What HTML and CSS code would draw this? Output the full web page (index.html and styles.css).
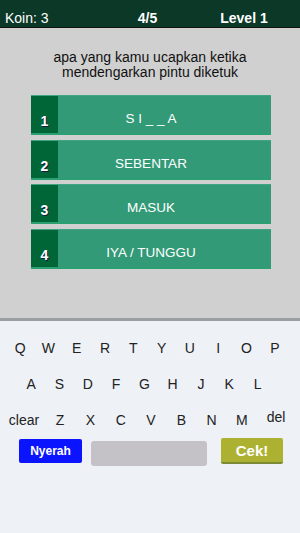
FILE: index.html
```html
<!DOCTYPE html>
<html lang="id">
<head>
    <meta charset="UTF-8">
    <meta name="viewport" content="width=device-width, initial-scale=1.0">
    <title>Tebak Kata</title>
    <link rel="stylesheet" href="styles.css">
</head>
<body>
    <div class="header">
        <div class="koin">Koin: 3</div>
        <div class="soal">4/5</div>
        <div class="level">Level 1</div>
    </div>

    <div class="board">
        <p class="question">apa yang kamu ucapkan ketika<br>mendengarkan pintu diketuk</p>
        <div class="options">
            <div class="option"><span class="num">1</span><span class="text">S I _ _ A</span></div>
            <div class="option"><span class="num">2</span><span class="text">SEBENTAR</span></div>
            <div class="option"><span class="num">3</span><span class="text">MASUK</span></div>
            <div class="option"><span class="num">4</span><span class="text">IYA / TUNGGU</span></div>
        </div>
    </div>

    <div class="keyboard">
        <div class="row row1">
            <span class="key">Q</span><span class="key">W</span><span class="key">E</span><span class="key">R</span><span class="key">T</span><span class="key">Y</span><span class="key">U</span><span class="key">I</span><span class="key">O</span><span class="key">P</span>
        </div>
        <div class="row row2">
            <span class="key">A</span><span class="key">S</span><span class="key">D</span><span class="key">F</span><span class="key">G</span><span class="key">H</span><span class="key">J</span><span class="key">K</span><span class="key">L</span>
        </div>
        <div class="row row3">
            <span class="key wide">clear</span><span class="key">Z</span><span class="key">X</span><span class="key">C</span><span class="key">V</span><span class="key">B</span><span class="key">N</span><span class="key">M</span><span class="key del">del</span>
        </div>
        <div class="actions">
            <button class="btn-nyerah">Nyerah</button>
            <div class="answer"></div>
            <button class="btn-cek">Cek!</button>
        </div>
    </div>
</body>
</html>
```

FILE: styles.css
```css
body {
    margin: 0;
    padding: 0;
    width: 300px;
    height: 533px;
    overflow: hidden;
    font-family: "Liberation Sans", Arial, sans-serif;
    background-color: #eef1f6;
}
.header {
    display: grid;
    grid-template-columns: 1fr 1fr 1fr;
    height: 27px;
    background-color: #0b3827;
    border-bottom: 1px solid #111;
    color: white;
    font-size: 14px;
    line-height: 16px;
    box-sizing: content-box;
}
.header div {
    padding-top: 10px;
}
.koin {
    padding-left: 5px;
}
.soal {
    text-align: center;
    font-weight: bold;
    padding-right: 5px;
}
.level {
    text-align: center;
    font-weight: bold;
    padding-right: 12px;
}
.board {
    background-color: #d0d0d0;
    height: 290px;
    padding-top: 1px;
    box-sizing: border-box;
}
.question {
    margin: 21px 0 0 0;
    text-align: center;
    font-size: 14px;
    line-height: 15px;
    color: #111;
}
.options {
    margin: 15px 29px 0 31px;
    display: flex;
    flex-direction: column;
    gap: 4.6px;
}
.option {
    display: grid;
    grid-template-columns: 27px 1fr 27px;
    height: 40px;
    box-sizing: border-box;
    background-color: #339a77;
    border-top: 1px solid #3ea580;
    border-bottom: 2px solid #2a9f72;
    color: white;
}
.num {
    background-color: #006638;
    font-weight: bold;
    font-size: 14px;
    text-align: center;
    padding-top: 17px;
    text-shadow: 1px 1px 0 #1a1a40;
}
.text {
    font-size: 13.5px;
    text-align: center;
    padding-top: 15px;
}
.keyboard {
    border-top: 3px solid #9a9ea1;
    padding-top: 9px;
    height: 211px;
    border-bottom: 1px solid #dcdde2;
}
.row {
    display: flex;
    height: 36px;
    align-items: center;
}
.key {
    width: 28.3px;
    text-align: center;
    font-size: 14px;
    color: #222;
}
.row1 {
    padding-left: 6px;
}
.row2 {
    padding-left: 17px;
}
.row3 {
    padding-left: 6px;
}
.row3 .key {
    width: 30.3px;
}
.row3 .wide {
    width: 36px;
    text-align: center;
    margin-right: 3px;
}
.row3 .del {
    width: 36px;
    margin-left: 1px;
    position: relative;
    top: -3px;
}
.actions {
    display: flex;
    align-items: flex-start;
    padding-left: 19px;
}
button {
    border: none;
    color: white;
    font-family: "Liberation Sans", Arial, sans-serif;
    font-weight: bold;
    cursor: pointer;
    padding: 0;
}
.btn-nyerah {
    width: 63px;
    height: 24px;
    margin-top: 1px;
    background-color: #0a14ff;
    border-radius: 2px;
    font-size: 12px;
}
.answer {
    width: 116px;
    height: 25px;
    margin-top: 3px;
    margin-left: 9px;
    background-color: #c4c2c6;
    border-radius: 3px;
}
.btn-cek {
    width: 62px;
    height: 26px;
    margin-left: 14px;
    background-color: #adb132;
    border-bottom: 2px solid #7b8a34;
    border-radius: 2px;
    font-size: 15px;
}
```
